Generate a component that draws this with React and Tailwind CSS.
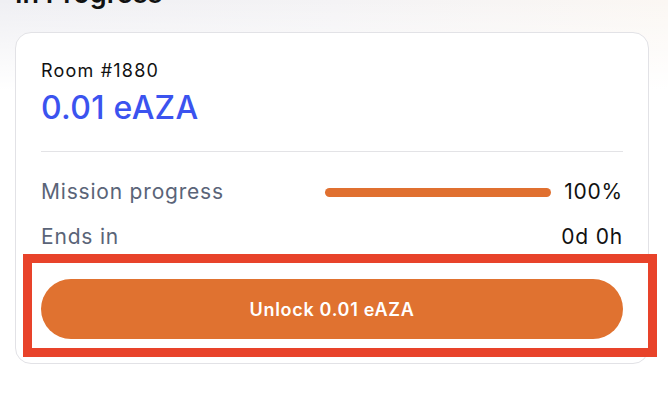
import React from "react";

const font = { fontFamily: "Inter, 'Noto Sans', sans-serif" };

const InProgressCard = () => {
  return (
    <div className="relative ml-[15px] mr-[19px] mt-[32px] rounded-[16px] border border-[#e2e2e6] bg-white px-[25px] pt-[26px] pb-[24px]">
      <div className="text-[18px] leading-[24px] tracking-[1.2px] text-[#111]">Room #1880</div>
      <div className="mt-[6px] text-[32px] leading-[38px] font-medium tracking-[0.3px] text-[#3b53ef]">
        0.01 eAZA
      </div>

      <div className="mt-[24px] h-px bg-[#e3e3e6]" />

      {/* Stats */}
      <div className="mt-[26px] flex items-center justify-between h-[28px]">
        <span className="text-[21px] tracking-[0.8px] text-[#5a6478]">Mission progress</span>
        <div className="flex items-center gap-[13px]">
          <div className="h-[9px] w-[226px] rounded-full bg-[#e07030]" />
          <span className="text-[21px] tracking-[0.8px] text-[#111]">100%</span>
        </div>
      </div>
      <div className="mt-[17px] flex items-center justify-between h-[28px]">
        <span className="text-[21px] tracking-[0.8px] text-[#5a6478]">Ends in</span>
        <span className="text-[21px] tracking-[0.8px] text-[#111]">0d 0h</span>
      </div>

      <div className="relative mt-[28px]">
        <button className="h-[60px] w-full rounded-[30px] bg-[#e07230] text-[18px] tracking-[0.7px] font-semibold text-white">
          Unlock 0.01 eAZA
        </button>
        {/* highlight annotation */}
        <div className="pointer-events-none absolute -left-[18px] -right-[34px] -top-[25px] -bottom-[18px] border-[9px] border-[#e8432a]" />
      </div>
    </div>
  );
};

export default function App() {
  return (
    <div className="relative h-[400px] w-[668px] overflow-hidden bg-white" style={font}>
      <div className="absolute inset-x-0 top-0 h-[90px] bg-gradient-to-r from-[#efeff3] via-[#f4f3f5] to-[#fbf7f3]">
        <div className="h-full w-full bg-gradient-to-b from-transparent to-white" />
      </div>
      <div className="relative">
        <h2 className="absolute left-[15px] -top-[22px] text-[27px] leading-[34px] font-semibold text-[#111]">
          In Progress
        </h2>
        <div className="pt-px -mt-px">
          <InProgressCard />
        </div>
      </div>
    </div>
  );
}
